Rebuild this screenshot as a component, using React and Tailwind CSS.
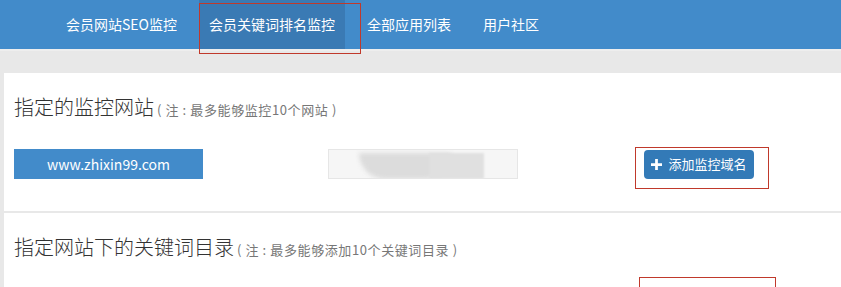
import React from "react";

const navItems = ["会员网站SEO监控", "会员关键词排名监控", "全部应用列表", "用户社区"];

export default function App() {
  return (
    <div
      className="relative w-[841px] h-[287px] overflow-hidden bg-[#e8e8e8]"
      style={{ fontFamily: '"Noto Sans CJK SC", "Liberation Sans", sans-serif' }}
    >
      {/* top nav */}
      <div className="h-[49px] bg-[#428bca] flex items-stretch pl-[56px] gap-3">
        {navItems.map((item, i) => (
          <div
            key={item}
            className={
              "flex items-center px-[10px] text-[14px] text-white " +
              (i === 1 ? "bg-[#3a7ab4]" : "")
            }
          >
            {item}
          </div>
        ))}
      </div>
      <div className="h-[2px] bg-[#eeeeee]" />

      <div className="pt-[22px] pl-[4px]">
        {/* panel 1 */}
        <div className="bg-white h-[138px] pl-[10px] pt-[20px]">
          <div className="flex items-baseline text-[#333]">
            <span className="text-[20px] leading-[28px] font-light">指定的监控网站</span>
            <span className="text-[13px] text-[#777] ml-[3px] tracking-[0.6px]">( 注 : 最多能够监控10个网站 )</span>
          </div>
          <div className="flex items-center mt-[28px]">
            <div className="w-[314px]">
              <div className="w-[189px] h-[30px] bg-[#428bca] text-white text-[14px] flex items-center justify-center">
                www.zhixin99.com
              </div>
            </div>
            <div className="w-[316px]">
              <div className="relative w-[190px] h-[30px] border border-[#e6e6e6] bg-[#f6f6f6] overflow-hidden">
                <div className="absolute left-[30px] top-[3px] w-[92px] h-[26px] rounded-b-[40px] bg-[#dcdcdc] blur-[2px]" />
                <div className="absolute left-[100px] top-[3px] w-[55px] h-[26px] bg-[#e0e0e0] blur-[1px]" />
              </div>
            </div>
            <div className="w-[110px] h-[29px] rounded-[4px] bg-[#337ab7] text-white text-[13px] flex items-center justify-center gap-[6px]">
              <svg width="11" height="11" viewBox="0 0 12 12">
                <path d="M4.5 0h3v4.5H12v3H7.5V12h-3V7.5H0v-3h4.5z" fill="white" />
              </svg>
              <span>添加监控域名</span>
            </div>
          </div>
        </div>

        {/* panel 2 */}
        <div className="bg-white h-[80px] mt-[2px] pl-[10px] pt-[20px]">
          <div className="flex items-baseline text-[#333]">
            <span className="text-[20px] leading-[28px] font-light">指定网站下的关键词目录</span>
            <span className="text-[13px] text-[#777] ml-[3px] tracking-[0.6px]">( 注 : 最多能够添加10个关键词目录 )</span>
          </div>
        </div>
      </div>

      {/* red annotation boxes */}
      <div className="absolute left-[199px] top-[3px] w-[162px] h-[51px] border border-[#c0392b]" />
      <div className="absolute left-[635px] top-[147px] w-[134px] h-[42px] border border-[#c0392b]" />
      <div className="absolute left-[639px] top-[277px] w-[137px] h-[30px] border border-[#c0392b]" />
    </div>
  );
}
